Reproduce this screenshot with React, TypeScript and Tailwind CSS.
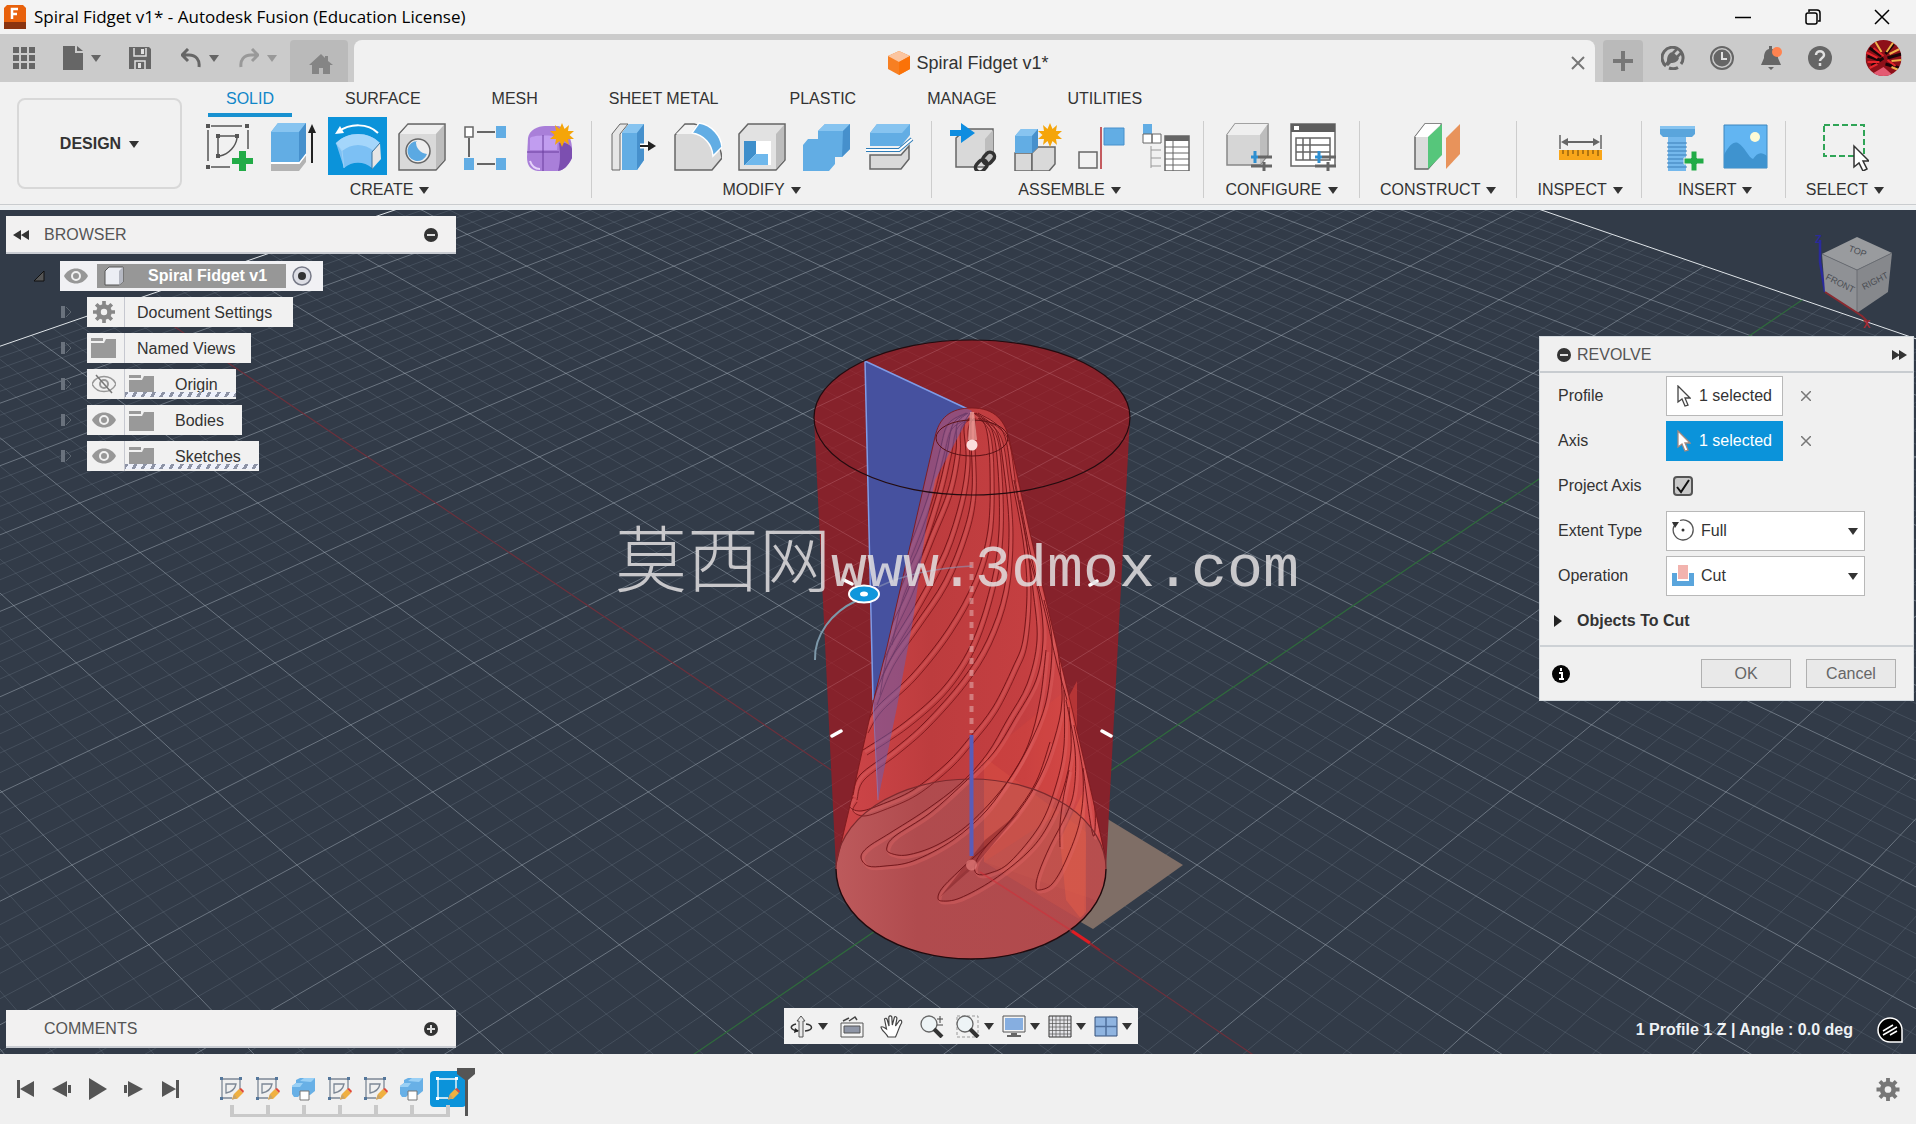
import type { ReactNode } from 'react';

type Point = [number, number];

const ORIGIN: Point = [972, 865];
const GRID_HALF = 11;

/** ground plane -> screen */
function project(x: number, y: number): Point {
  const s = x + y;
  const d = y - x;
  const w = 1 + 0.044 * d;
  return [
    (ORIGIN[0] + 112.5 * s + 42.3 * d) / w,
    (ORIGIN[1] - 38.2 * d) / w,
  ];
}

/** the part of a grid line that lies in front of the camera */
function gridLine(k: number, along: 'x' | 'y') {
  const from = along === 'x' ? -GRID_HALF : Math.max(-GRID_HALF, k - 14);
  const to = along === 'x' ? Math.min(GRID_HALF, k + 14) : GRID_HALF;
  const [a, b] =
    along === 'x'
      ? [project(from, k), project(to, k)]
      : [project(k, from), project(k, to)];
  return `M${a[0].toFixed(1)} ${a[1].toFixed(1)}L${b[0].toFixed(1)} ${b[1].toFixed(1)}`;
}

const majorLines: string[] = [];
const minorLines: string[] = [];
for (let i = -GRID_HALF * 5 + 1; i < GRID_HALF * 5; i++) {
  if (i === 0) continue;
  const target = i % 5 === 0 ? majorLines : minorLines;
  target.push(gridLine(i / 5, 'x'), gridLine(i / 5, 'y'));
}

function smooth(points: Point[], dx = 0, dy = 0) {
  const p = points.map(([x, y]): Point => [x + dx, y + dy]);
  let d = `M${p[0][0]} ${p[0][1]}`;
  for (let i = 0; i < p.length - 1; i++) {
    const p0 = p[i - 1] ?? p[i];
    const p1 = p[i];
    const p2 = p[i + 1];
    const p3 = p[i + 2] ?? p2;
    const c1x = p1[0] + (p2[0] - p0[0]) / 6;
    const c1y = p1[1] + (p2[1] - p0[1]) / 6;
    const c2x = p2[0] - (p3[0] - p1[0]) / 6;
    const c2y = p2[1] - (p3[1] - p1[1]) / 6;
    d += `C${c1x.toFixed(1)} ${c1y.toFixed(1)} ${c2x.toFixed(1)} ${c2y.toFixed(1)} ${p2[0]} ${p2[1]}`;
  }
  return d;
}

/* flutes running round the cone, top to bottom */
const FLUTES: Point[][] = [
  [[966, 413], [948, 424], [940, 450], [930, 490], [916, 530], [900, 570]],
  [[967, 413], [953, 424], [947, 452], [938, 490], [922, 540], [900, 590], [888, 640]],
  [[968, 413], [957, 424], [956, 450], [948, 490], [930, 535], [908, 590], [886, 640], [876, 690]],
  [[970, 413], [964, 426], [966, 460], [960, 500], [944, 550], [918, 600], [894, 640], [878, 672]],
  [[971, 413], [971, 440], [972, 490], [964, 530], [944, 580], [915, 624], [890, 660], [873, 700]],
  [[974, 413], [986, 428], [990, 470], [988, 530], [974, 580], [948, 628], [912, 674], [878, 706], [864, 728]],
  [[975, 413], [992, 430], [998, 470], [999, 530], [992, 580], [973, 640], [945, 685], [905, 722], [863, 750]],
  [[976, 413], [996, 430], [1004, 470], [1009, 530], [1004, 590], [987, 640], [962, 680], [925, 722], [893, 750], [860, 775], [853, 795]],
  [[978, 413], [1003, 432], [1012, 480], [1023, 540], [1027, 590], [1023, 640], [1013, 667], [993, 707], [970, 737], [947, 763], [913, 790], [880, 805], [860, 811], [849, 806], [853, 797]],
  [[1014, 480], [1026, 540], [1033, 590], [1037, 640], [1027, 684], [1007, 720], [987, 754], [960, 784], [926, 810], [890, 833], [868, 847], [861, 857], [868, 866], [885, 866], [913, 861], [953, 840], [987, 810], [1013, 773], [1033, 737], [1047, 697], [1052, 640], [1044, 600]],
  [[1030, 560], [1040, 600], [1043, 640], [1036, 680], [1014, 720], [994, 752], [967, 780], [930, 813], [895, 836], [887, 847], [890, 853], [907, 855], [937, 845], [970, 823], [1005, 785], [1028, 745], [1040, 700], [1046, 650]],
  [[1058, 650], [1062, 700], [1054, 740], [1040, 777], [1018, 812], [990, 842], [960, 870], [943, 887], [938, 897], [942, 901], [960, 898], [993, 880], [1027, 853], [1047, 827], [1063, 790], [1071, 750], [1069, 707]],
  [[1064, 690], [1064, 745], [1056, 785], [1040, 825], [1010, 862], [990, 873], [977, 874], [975, 864], [985, 848], [1012, 818], [1036, 782], [1050, 742]],
  [[1066, 700], [1075, 750], [1074, 790], [1066, 815], [1050, 846], [1039, 872], [1036, 886], [1039, 890], [1052, 884], [1066, 860], [1080, 820], [1083, 775], [1074, 725]],
  [[1069, 770], [1063, 800], [1060, 825], [1060, 847]],
  [[1076, 725], [1088, 770], [1095, 810], [1094, 836], [1090, 820], [1083, 768]],
  [[1020, 500], [1032, 560], [1047, 620], [1056, 660], [1067, 700]],
];
/* these ones are drawn as a pair of edges */
const PAIRED = 9;

const CONE =
  'M972 408C950 408 939 418 935 437L913 533L887 647L873 703L852 797L836 865A135 90 0 0 0 1106 865L1104 853L1093 800L1073 713L1057 647L1030 533L1010 443C1006 420 994 408 972 408Z';

const CYLINDER = 'M814 417.5A158 77.5 0 0 1 1130 417.5L1106 869A135 90 0 0 1 836 869Z';

function Scene() {
  const red = [project(-11, 0), project(3.6, 0)];
  const green = [project(0, -3), project(0, 11)];
  const corner = project(-11, 11);
  const left = project(-11, -2);
  const right = project(2, 11);
  return (
    <svg
      className="absolute inset-0 h-full w-full"
      viewBox="0 210 1916 844"
      preserveAspectRatio="xMidYMid slice"
      aria-hidden="true"
    >
      <defs>
        <clipPath id="cone">
          <path d={CONE} />
        </clipPath>
        <clipPath id="cylinder">
          <path d={CYLINDER} />
        </clipPath>
        <clipPath id="base">
          <ellipse cx="971" cy="869" rx="135" ry="90" />
        </clipPath>
        <linearGradient id="coneFill" x1="836" x2="1106" y1="0" y2="0" gradientUnits="userSpaceOnUse">
          <stop offset="0" stopColor="#cf4649" />
          <stop offset="0.35" stopColor="#bd3c3e" />
          <stop offset="0.7" stopColor="#c43f41" />
          <stop offset="1" stopColor="#d54c4c" />
        </linearGradient>
        <linearGradient id="baseFill" x1="836" x2="1106" y1="0" y2="0" gradientUnits="userSpaceOnUse">
          <stop offset="0" stopColor="#bd5a5c" />
          <stop offset="0.3" stopColor="#b04b4e" />
          <stop offset="1" stopColor="#b24a4c" />
        </linearGradient>
      </defs>
      <rect x="0" y="0" width="1916" height="1264" fill="#323b48" />
      <path d={minorLines.join('')} stroke="#8996a3" strokeOpacity="0.22" fill="none" />
      <path d={majorLines.join('')} stroke="#a9b4bf" strokeOpacity="0.48" fill="none" />
      <path d={`M${left.join(' ')}L${corner.join(' ')}L${right.join(' ')}`} stroke="#dfe4e8" fill="none" />
      <path d={`M${red[0].join(' ')}L${red[1].join(' ')}`} stroke="#6c303c" strokeWidth="1.2" />
      <path d={`M${green[0].join(' ')}L${green[1].join(' ')}`} stroke="#2f6b3c" strokeWidth="1.2" />

      <path d="M984 867L1093 929L1183 865L1078 801Z" fill="#7f6e66" />

      <path d={CYLINDER} fill="#86222b" />
      <g clipPath="url(#cylinder)" fill="none">
        <path d={minorLines.join('')} stroke="#c07a80" strokeOpacity="0.1" />
        <path d={majorLines.join('')} stroke="#c98088" strokeOpacity="0.32" />
      </g>
      <path d="M865 361L972 411L935 480L873 700Z" fill="#46519f" />
      <path d="M873 700L865 361L972 411" stroke="#7f9be6" strokeWidth="1.5" fill="none" />

      <path d={CONE} fill="url(#coneFill)" />
      <ellipse cx="971" cy="869" rx="135" ry="90" fill="url(#baseFill)" />
      <g clipPath="url(#base)">
        <path d="M984 750H1110V905L984 862Z" fill="#cf6158" fillOpacity="0.2" />
      </g>
      <g clipPath="url(#cone)">
        <path d="M984 757L1077 681L1078 801L984 862Z" fill="#e8503c" fillOpacity="0.18" />
        <path d="M984 757L1086 832L1084 922L984 862Z" fill="#e8604a" fillOpacity="0.22" />
        <path d="M1066 900L1060 840L1084 790L1086 840V925Z" fill="#e8604a" fillOpacity="0.45" />
        <g fill="none">
          {FLUTES.map((flute, i) => (
            <path key={i} d={smooth(flute, 2, 2)} stroke="#de6463" strokeOpacity="0.4" strokeWidth="3" />
          ))}
          {FLUTES.map((flute, i) => (
            <path key={i} d={smooth(flute)} stroke="#6e1216" strokeOpacity="0.9" />
          ))}
          {FLUTES.slice(0, PAIRED).map((flute, i) => (
            <path key={i} d={smooth(flute, 4, 5)} stroke="#741519" strokeOpacity="0.8" />
          ))}
        </g>
        <path d="M975 866L1020 812L985 840L940 897Z" fill="#7a1d22" fillOpacity="0.45" />
        <path d="M972 411L935 480L927 520L913 620L897 707L878 800L873 700L865 361Z" fill="#6460b8" fillOpacity="0.5" />
      </g>
      <path d="M873 700L878 800" stroke="#8a7fc0" strokeOpacity="0.7" />
      <path d="M1067 700L1077 681V735Z" fill="#d5433d" fillOpacity="0.6" />
      <path d="M836 865L852 797L873 703L887 647L913 533L935 437C939 418 950 408 972 408C994 408 1006 420 1010 443L1030 533L1057 647L1073 713L1093 800L1105 855" fill="none" stroke="#7a171b" strokeOpacity="0.85" />
      <ellipse cx="972" cy="438" rx="36" ry="18" fill="none" stroke="#5c1216" />
      <path d="M970 412L974 412L977 440L968 440Z" fill="#f0a9a4" fillOpacity="0.7" />
      <ellipse cx="972" cy="417.5" rx="158" ry="77.5" fill="none" stroke="#230b0f" strokeWidth="1.2" />
      <path d="M836 869A135 90 0 0 1 1106 869" fill="none" stroke="#7d2a2e" strokeWidth="1.2" />
      <path d="M836 869A135 90 0 0 0 1106 869" fill="none" stroke="#200a0d" strokeWidth="1.4" />

      <path d="M971.500 562V733" stroke="#eccaca" strokeOpacity="0.45" strokeWidth="4" strokeDasharray="6 6" />
      <path d="M971.500 735V856" stroke="#595cba" strokeWidth="4" />
      <path d="M980 872L1072 931" stroke="#d0303a" strokeOpacity="0.6" strokeWidth="1.5" />
      <path d="M1072 931L1090 943" stroke="#e01c22" strokeWidth="3" />
      <path d="M1090 943L1100 950" stroke="#a02028" strokeWidth="1.5" />
      <circle cx="971.500" cy="865" r="5.500" fill="#e07a78" fillOpacity="0.75" />
      <circle cx="972" cy="445" r="5.500" fill="#fbdcdc" />

      <path d="M815 660C814 635 832 612 856 601" fill="none" stroke="#7d98a9" strokeWidth="2" />
      <path d="M878 587C905 574 935 568 972 566" fill="none" stroke="#8d98b8" strokeOpacity="0.6" strokeWidth="1.500" />
      <path d="M844 580L852 584M1090 585L1097 581M832 736L841 731M1102 731L1111 736" stroke="#fff" strokeWidth="3.500" strokeLinecap="round" />
      <ellipse cx="864" cy="594" rx="15" ry="8.500" fill="#0f96dc" stroke="#fff" strokeWidth="2" />
      <ellipse cx="864" cy="594" rx="4" ry="2.500" fill="#fff" />
    </svg>
  );
}

function ViewCube() {
  return (
    <svg className="absolute top-4 right-2 h-[104px] w-[100px]" viewBox="1808 226 100 104" aria-label="View cube">
      <path d="M1820 240V262L1825 292" stroke="#2a2a9c" strokeWidth="2.500" fill="none" />
      <path d="M1857 237L1892 253L1857 270L1822 254Z" fill="#999b9e" />
      <path d="M1822 254L1857 270V313L1825 292Z" fill="#8f9195" />
      <path d="M1857 270L1892 253L1888 292L1857 313Z" fill="#86888c" />
      <path d="M1822 254L1857 270L1892 253M1857 270V313" stroke="#6a6d73" fill="none" />
      <path d="M1825 292L1862 316L1868 322" stroke="#8a2a30" strokeWidth="2" fill="none" />
      <g fontFamily="Liberation Sans" fontSize="9" fill="#4a4d53">
        <text transform="translate(1825 279) rotate(27)">FRONT</text>
        <text transform="translate(1864 290) rotate(-27)">RIGHT</text>
        <text transform="translate(1848 251) rotate(20)">TOP</text>
      </g>
      <g fontFamily="Liberation Sans" fontSize="11" fontWeight="bold">
        <text x="1815" y="243" fill="#2a2a9c">Z</text>
        <text x="1863" y="328" fill="#a82b32">X</text>
      </g>
    </svg>
  );
}

const Caret = ({ className = 'text-[#333]' }: { className?: string }) => (
  <svg className={`h-2 w-[10px] shrink-0 ${className}`} viewBox="0 0 10 8" fill="currentColor" aria-hidden="true">
    <path d="M0 1H10L5 8Z" />
  </svg>
);

function Icon({ children, className = 'h-[50px] w-12', box = '0 0 48 50' }: { children: ReactNode; className?: string; box?: string }) {
  return (
    <svg className={`shrink-0 ${className}`} viewBox={box} fill="none" aria-hidden="true">
      {children}
    </svg>
  );
}

const STAR = 'M0-12L2.500-6L7-10L6-4L12-4L7.500 0L12 4L6 4L7 10L2.500 6L0 12L-2.500 6L-7 10L-6 4L-12 4L-7.500 0L-12-4L-6-4L-7-10L-2.500-6Z';

const Star = ({ x, y }: { x: number; y: number }) => <path transform={`translate(${x} ${y})`} d={STAR} fill="#f5a50a" />;

const sliders = (
  <g strokeWidth="3">
    <path d="M25 36H32" stroke="#2f8fd0" />
    <path d="M29 30V42" stroke="#2f8fd0" />
    <path d="M32 36H46M25 45H46" stroke="#666" />
    <path d="M38 41V50" stroke="#666" />
  </g>
);

const ICONS: Record<string, ReactNode> = {
  'Create Sketch': (
    <>
      <path d="M5 5H36M2 9V40M42 9V28M5 46H24" stroke="#555" strokeWidth="1.500" />
      <path d="M0 3H4V7H0ZM39 3H43V7H39ZM0 44H4V48H0ZM10 13H14V17H10ZM29 13H33V17H29ZM10 33H14V37H10Z" fill="#555" />
      <path d="M14 15H29M12 17V33M31 17C30 25 23 33 14 35" stroke="#555" strokeWidth="1.500" />
      <path d="M33 30H40V37H47V43H40V50H33V43H26V37H33Z" fill="#22ab47" />
    </>
  ),
  Extrude: (
    <>
      <path d="M1 43H29L36 34V41L29 50H1Z" fill="#b3b3b3" />
      <path d="M1 42H29L36 33" stroke="#fff" strokeWidth="2" />
      <path d="M1 11L8 2H36V32L29 41H1Z" fill="#62ade4" />
      <path d="M1 11L8 2H36L29 11Z" fill="#87c4f0" />
      <path d="M29 11L36 2V32L29 41Z" fill="#4690cc" />
      <path d="M42 42V8" stroke="#222" strokeWidth="2" />
      <path d="M42 3L46 12H38Z" fill="#222" />
    </>
  ),
  Revolve: (
    <>
      <path d="M2 22C14 10 34 10 46 22L38 47C30 40 18 40 10 47Z" fill="#7cc0f4" />
      <path d="M2 22C14 10 34 10 46 22L40 30C30 22 18 22 8 30Z" fill="#a4d6fb" />
      <path d="M46 22L47 38L38 48L38 31Z" fill="#e6e6e6" />
      <path d="M38 48V31L46 22" stroke="#38729c" strokeWidth="1" />
      <path d="M2 22L8 30L10 47" stroke="#9bd0f7" />
      <path d="M4 11C16 2 34 2 44 12" stroke="#fff" strokeWidth="2" />
      <path d="M1 13L6 5L10 12Z" fill="#fff" />
    </>
  ),
  Hole: (
    <>
      <path d="M1 13L10 3H47V39L38 49H1Z" fill="#d9d9d9" stroke="#666" strokeWidth="1.500" />
      <path d="M2 13L10 4H46L38 13Z" fill="#efefef" />
      <path d="M38 13L46 4V39L38 48Z" fill="#bdbdbd" />
      <circle cx="20" cy="30" r="12" fill="#eee" stroke="#666" strokeWidth="1.500" />
      <path d="M20 20A10 10 0 1 0 29 33A12 12 0 0 1 18 20Z" fill="#5ba9e2" />
    </>
  ),
  Pattern: (
    <>
      <path d="M15 11H33M7 17V36M15 43H33" stroke="#666" strokeWidth="2" />
      <path d="M3 6H11V16H3Z" fill="#fff" stroke="#666" strokeWidth="1.500" />
      <path d="M34 5H44V17H34ZM2 37H12V49H2ZM34 37H44V49H34Z" fill="#62ade4" />
    </>
  ),
  'Create Form': (
    <>
      <path d="M2 17C3 9 12 5 19 5H32C40 6 45 16 46 26V37C42 46 36 50 31 50H12C4 49 1 44 1 36Z" fill="#a97fd9" />
      <path d="M33 22C40 21 45 24 46 28V37C42 45 38 49 32 50C35 40 34 30 33 22Z" fill="#7c4fb0" />
      <path d="M4 17C8 14 24 14 32 16L31 29H4Z" fill="#c19df0" />
      <path d="M1 31H33M17 14V50" stroke="#6a3f9e" />
      <path d="M4 40C6 46 10 48 14 48" stroke="#e6d4fb" strokeWidth="2" />
      <Star x={36} y={14} />
    </>
  ),
  'Press Pull': (
    <>
      <path d="M2 13L10 3H18L10 13V49H2Z" fill="#e6e6e6" stroke="#666" />
      <path d="M12 12L19 3H34V39L27 49H12Z" fill="#62ade4" />
      <path d="M12 12L19 3H34L27 12Z" fill="#87c4f0" />
      <path d="M27 12L34 3V39L27 49Z" fill="#4690cc" />
      <path d="M30 25H42" stroke="#fff" strokeWidth="5" />
      <path d="M30 25H40" stroke="#222" strokeWidth="2" />
      <path d="M38 20L46 25L38 30Z" fill="#222" />
    </>
  ),
  Fillet: (
    <>
      <path d="M1 14L11 3H20C34 6 46 20 48 37L38 49H1Z" fill="#d9d9d9" stroke="#666" strokeWidth="1.500" />
      <path d="M2 13L11 4H22L17 13Z" fill="#f3f3f3" />
      <path d="M25 2C38 4 47 15 48 26L39 35C38 23 30 14 18 12Z" fill="#62ade4" stroke="#fff" strokeWidth="1.500" />
    </>
  ),
  Shell: (
    <>
      <path d="M1 13L10 3H47V39L38 49H1Z" fill="#e2e2e2" stroke="#666" strokeWidth="1.500" />
      <path d="M38 13L46 4V39L38 48Z" fill="#bdbdbd" />
      <path d="M6 20H33V44H6Z" fill="#fff" />
      <path d="M6 20H18V33L7 44H6Z" fill="#3f8fcb" />
      <path d="M18 33H30V44H7Z" fill="#6fb8ec" />
    </>
  ),
  Combine: (
    <>
      <path d="M1 24L6 18H16V10L23 3H48V28L40 36H33V43L27 50H1Z" fill="#62ade4" />
      <path d="M16 10L23 3H48L41 10Z" fill="#87c4f0" />
      <path d="M41 10L48 3V28L40 36Z" fill="#4690cc" />
    </>
  ),
  Split: (
    <>
      <path d="M4 12L11 3H44V14L35 25H4Z" fill="#62ade4" />
      <path d="M4 12L11 3H44L36 12Z" fill="#87c4f0" />
      <path d="M4 34H35L43 25V38L35 48H4Z" fill="#d9d9d9" stroke="#666" strokeWidth="1.500" />
      <path d="M0 29H33L46 18" stroke="#2f7db8" strokeWidth="4" />
      <path d="M0 29H33L46 18" stroke="#fff" strokeWidth="2" />
    </>
  ),
  'Insert Derive': (
    <>
      <path d="M6 17L16 8H43V36L35 46H6Z" fill="#d9d9d9" stroke="#666" strokeWidth="1.500" />
      <path d="M35 18L43 9V36L35 46Z" fill="#bdbdbd" />
      <path d="M0 9H11V2L25 12L11 22V15H0Z" fill="#0e8de0" />
      <g stroke="#333" strokeWidth="3.500">
        <rect x="-9" y="-4.500" width="13" height="9" rx="4.500" transform="translate(33 43) rotate(-48)" />
        <rect x="-4" y="-4.500" width="13" height="9" rx="4.500" transform="translate(37 39) rotate(-48)" />
      </g>
    </>
  ),
  'New Component': (
    <>
      <path d="M1 32H18V50H1Z" fill="#d9d9d9" stroke="#666" strokeWidth="1.500" />
      <path d="M18 32L24 26H41V43L35 50H18Z" fill="#d9d9d9" stroke="#666" strokeWidth="1.500" />
      <path d="M1 15L7 8H24V26L18 32H1Z" fill="#62ade4" />
      <path d="M1 15L7 8H24L18 15Z" fill="#87c4f0" />
      <path d="M18 15L24 8V26L18 32Z" fill="#4690cc" />
      <Star x={36} y={14} />
    </>
  ),
  Joint: (
    <>
      <path d="M1 31H19V47H1Z" stroke="#666" strokeWidth="1.500" />
      <path d="M26 7H46V24H26Z" fill="#62ade4" stroke="#4690cc" />
      <path d="M23 6V48" stroke="#b4282e" strokeWidth="1.500" />
    </>
  ),
  'Motion Study': (
    <>
      <path d="M1 3H10V13H1Z" fill="#62ade4" />
      <path d="M1 13H10V22H1ZM10 13H19V22H10Z" fill="#fff" stroke="#666" />
      <path d="M9 25V47M9 29H19M9 37H19M9 45H19" stroke="#999" />
      <path d="M23 15H47V50H23Z" fill="#fff" stroke="#666" strokeWidth="1.500" />
      <path d="M23 15H47V20H23Z" fill="#666" />
      <path d="M31 20V50M23 26H47M23 32H47M23 38H47M23 44H47" stroke="#666" />
    </>
  ),
  Configure: (
    <>
      <path d="M1 14L9 3H42V34L34 44H1Z" fill="#d6d6d6" stroke="#888" strokeWidth="1.500" />
      <path d="M1 14L9 3H42L34 14Z" fill="#efefef" />
      <path d="M34 14L41 4V34L34 44Z" fill="#bdbdbd" />
      {sliders}
    </>
  ),
  'Configuration Table': (
    <>
      <path d="M1 3H45V45H1Z" fill="#fff" stroke="#666" strokeWidth="1.500" />
      <path d="M1 3H45V11H1Z" fill="#5d5d5d" />
      <path d="M4 5H9V9H4Z" fill="#fff" />
      <path d="M6 17H40V39H6ZM13 17V39M20 17V39M6 24H40M6 31H40" stroke="#666" strokeWidth="1.500" />
      {sliders}
    </>
  ),
  'Offset Plane': (
    <>
      <path d="M1 16L11 3H27V33L14 48H1Z" fill="#dcdcdc" stroke="#666" strokeWidth="1.500" />
      <path d="M1 16L11 3H27L14 16Z" fill="#fff" />
      <path d="M14 16L28 3V34L14 48Z" fill="#56c67b" />
      <path d="M32 17L46 3V33L32 48Z" fill="#e8935b" />
    </>
  ),
  Measure: (
    <>
      <path d="M4 14V28M45 14V28" stroke="#666" strokeWidth="1.500" />
      <path d="M10 21H39" stroke="#666" strokeWidth="2" />
      <path d="M5 21L12 17V25ZM44 21L37 17V25Z" fill="#666" />
      <path d="M3 29H46V39H3Z" fill="#f9a61a" />
      <path d="M7 29V33M12 29V35M17 29V33M22 29V35M27 29V33M32 29V35M37 29V33M42 29V35" stroke="#6b4305" />
    </>
  ),
  'Insert Fastener': (
    <>
      <path d="M1 5H36V13L33 16H4L1 13Z" fill="#5aa5dc" />
      <path d="M1 5H36V8H1Z" fill="#87c4f0" />
      <path d="M9 16H27V50H9Z" fill="#74b8ec" />
      <path d="M8 22H28M8 26H28M8 30H28M8 34H28M8 38H28M8 42H28M8 46H28" stroke="#3b7fb8" />
      <path d="M32 30H38V37H45V43H38V50H32V43H25V37H32Z" fill="#22ab47" stroke="#f1f1f1" />
    </>
  ),
  'Insert Decal': (
    <>
      <path d="M1 4H44V47H1Z" fill="#62b5f2" stroke="#3d86be" />
      <path d="M1 34C6 24 11 20 15 22C22 26 25 36 30 38C34 32 38 30 44 35V47H1Z" fill="#3f93cf" />
      <circle cx="32" cy="16" r="5" fill="#fdfbd6" />
    </>
  ),
  Select: (
    <>
      <path d="M3 4H43V35H3Z" stroke="#2fa456" strokeWidth="2" strokeDasharray="6 3" />
      <path d="M33 25V46L38 42L42 50L46 48L42 40H48Z" fill="#fff" stroke="#333" strokeWidth="1.500" />
    </>
  ),
};

const GROUPS = [
  { label: 'CREATE', pad: 'pr-3 pl-[13px]', icons: ['Create Sketch', 'Extrude', 'Revolve', 'Hole', 'Pattern', 'Create Form'] },
  { label: 'MODIFY', pad: 'px-3', icons: ['Press Pull', 'Fillet', 'Shell', 'Combine', 'Split'] },
  { label: 'ASSEMBLE', pad: 'pr-2 pl-3', icons: ['Insert Derive', 'New Component', 'Joint', 'Motion Study'] },
  { label: 'CONFIGURE', pad: 'px-4', icons: ['Configure', 'Configuration Table'] },
  { label: 'CONSTRUCT', pad: 'px-5', icons: ['Offset Plane'] },
  { label: 'INSPECT', pad: 'pr-[18px] pl-5', icons: ['Measure'] },
  { label: 'INSERT', pad: 'pr-2 pl-3', icons: ['Insert Fastener', 'Insert Decal'] },
  { label: 'SELECT', pad: 'px-5', icons: ['Select'] },
];

const TABS = ['SOLID', 'SURFACE', 'MESH', 'SHEET METAL', 'PLASTIC', 'MANAGE', 'UTILITIES'];

function TitleBar() {
  return (
    <header className="flex h-[34px] items-center bg-[#f3f3f3] pl-1">
      <Icon className="h-6 w-[22px]" box="0 0 22 24">
        <path d="M3 0H19L22 3V24H0V3Z" fill="#e8610c" />
        <path d="M0 17H22V24H0Z" fill="#8a3410" />
        <path d="M8 14V4H14M8 9H13" stroke="#fff" strokeWidth="2.500" />
      </Icon>
      <h1 className="ml-2 font-['Open_Sans',sans-serif] text-[17px] text-black">
        Spiral Fidget v1* - Autodesk Fusion (Education License)
      </h1>
      <div className="ml-auto flex text-black">
        <button aria-label="Minimize" className="grid h-[34px] w-[70px] place-items-center">
          <Icon className="h-4 w-4" box="0 0 16 16">
            <path d="M0 8.500H16" stroke="currentColor" strokeWidth="1.500" />
          </Icon>
        </button>
        <button aria-label="Restore" className="grid h-[34px] w-[70px] place-items-center">
          <Icon className="h-4 w-4" box="0 0 16 16">
            <path d="M4 3V1H12C14 1 15 2 15 4V12H13" stroke="currentColor" strokeWidth="1.500" />
            <rect x="1" y="4" width="11" height="11" rx="2" stroke="currentColor" strokeWidth="1.500" />
          </Icon>
        </button>
        <button aria-label="Close" className="grid h-[34px] w-[68px] place-items-center">
          <Icon className="h-4 w-4" box="0 0 16 16">
            <path d="M1 1L15 15M15 1L1 15" stroke="currentColor" strokeWidth="1.500" />
          </Icon>
        </button>
      </div>
    </header>
  );
}

function DocumentBar() {
  return (
    <div className="flex h-12 items-end bg-[#cbcbcb] text-[#666]">
      <div className="flex h-full w-[290px] shrink-0 items-center pl-[13px]">
        <button aria-label="Data panel">
          <Icon className="h-[22px] w-[22px]" box="0 0 22 22">
            <path d="M0 0H6V6H0ZM8 0H14V6H8ZM16 0H22V6H16ZM0 8H6V14H0ZM8 8H14V14H8ZM16 8H22V14H16ZM0 16H6V22H0ZM8 16H14V22H8ZM16 16H22V22H16Z" fill="currentColor" />
          </Icon>
        </button>
        <button aria-label="File" className="ml-7 flex items-center gap-2">
          <Icon className="h-6 w-5" box="0 0 20 24">
            <path d="M0 0H12V7H20V24H0Z" fill="currentColor" />
            <path d="M14 0L20 5H14Z" fill="currentColor" />
          </Icon>
          <Caret className="text-[#666]" />
        </button>
        <button aria-label="Save" className="ml-7">
          <Icon className="h-[22px] w-[22px]" box="0 0 22 22">
            <path d="M0 0H20L22 2V22H0Z" fill="currentColor" />
            <path d="M5 1V9H17V1M6 22V14H16V22" stroke="#e0e0e0" strokeWidth="1.500" />
            <path d="M12 2H15V7H12ZM9 16H12V21H9Z" fill="#e0e0e0" />
          </Icon>
        </button>
        <button aria-label="Undo" className="ml-[30px] flex items-center gap-2">
          <Icon className="h-5 w-5" box="0 0 20 20">
            <path d="M7 1L1 7L7 13M2 7H8C15 7 19 12 18 19" stroke="currentColor" strokeWidth="3" />
          </Icon>
          <Caret className="text-[#666]" />
        </button>
        <button aria-label="Redo" className="ml-5 flex items-center gap-2 text-[#999]">
          <Icon className="h-5 w-5" box="0 0 20 20">
            <path d="M13 1L19 7L13 13M18 7H12C5 7 1 12 2 19" stroke="currentColor" strokeWidth="3" />
          </Icon>
          <Caret className="text-[#999]" />
        </button>
      </div>
      <button aria-label="Home" className="grid h-[42px] w-[58px] shrink-0 place-items-center rounded-t bg-[#bababa] pt-1.5 pl-1 text-[#858585]">
        <Icon className="h-5 w-6" box="0 0 24 20">
          <path d="M12 0L16 4V2H19V7L24 11H21V20H14V14H10V20H3V11H0Z" fill="currentColor" />
        </Icon>
      </button>
      <div className="ml-1.5 flex h-[42px] min-w-0 flex-1 items-center rounded-t-lg bg-[#f1f1f1] pt-1 pr-1.5">
        <div className="flex flex-1 items-center justify-center gap-1.5 pl-4 text-lg text-[#333]">
          <Icon className="h-6 w-[22px]" box="0 0 22 24">
            <path d="M11 0L22 5V18L11 24L0 18V5Z" fill="#f77f22" />
            <path d="M11 0L22 5L11 11L0 5Z" fill="#fbc5a0" />
            <path d="M11 11L22 5V18L11 24Z" fill="#fb7208" />
          </Icon>
          Spiral Fidget v1*
        </div>
        <button aria-label="Close tab" className="p-1">
          <Icon className="h-[14px] w-[14px]" box="0 0 14 14">
            <path d="M1 1L13 13M13 1L1 13" stroke="#777" strokeWidth="2" />
          </Icon>
        </button>
      </div>
      <button aria-label="New tab" className="ml-2 grid h-[42px] w-10 shrink-0 place-items-center rounded-t bg-[#bababa]">
        <Icon className="h-5 w-5" box="0 0 20 20">
          <path d="M10 0V20M0 10H20" stroke="#777" strokeWidth="4" />
        </Icon>
      </button>
      <div className="flex h-full shrink-0 items-center gap-[25px] pr-[14px] pl-[18px]">
        <button aria-label="Extensions">
          <Icon className="h-6 w-6" box="0 0 24 24">
            <path d="M5 20A10.500 10.500 0 1 1 20 18M8 22A10.500 10.500 0 0 0 17 21.500" stroke="currentColor" strokeWidth="3" />
            <path d="M6 15C6 9 9 6 12 6L18 12C17 16 13 17 10 17L7 20L4 18Z" fill="currentColor" />
            <path d="M12 7L16 3M16 11L20 7" stroke="currentColor" strokeWidth="2.500" />
          </Icon>
        </button>
        <button aria-label="Job status">
          <Icon className="h-6 w-6" box="0 0 24 24">
            <circle cx="12" cy="12" r="11" stroke="currentColor" strokeWidth="2" />
            <circle cx="12" cy="12" r="8.500" fill="currentColor" />
            <path d="M12 6V13H17" stroke="#e0e0e0" strokeWidth="2" />
          </Icon>
        </button>
        <button aria-label="Notifications">
          <Icon className="h-6 w-6" box="0 0 24 24">
            <path d="M10 0H13V3C18 4 19 8 19 12L22 19H2L5 12C5 8 6 4 10 3ZM9 21H15L12 24Z" fill="currentColor" />
            <circle cx="18" cy="6" r="5" fill="#ff8350" />
          </Icon>
        </button>
        <button aria-label="Help">
          <Icon className="h-6 w-6" box="0 0 24 24">
            <circle cx="12" cy="12" r="12" fill="currentColor" />
            <path d="M8 9C8 4 16 4 16 9C16 12 12 12 12 15M12 17V20" stroke="#e0e0e0" strokeWidth="2.500" />
          </Icon>
        </button>
        <button aria-label="Account">
          <Icon className="ml-2 h-9 w-[37px]" box="0 0 36 36">
            <clipPath id="avatar">
              <circle cx="18" cy="18" r="18" />
            </clipPath>
            <g clipPath="url(#avatar)">
              <path d="M0 0H36V36H0Z" fill="#8e1019" />
              <path d="M4 8L16 16M2 16L14 20M6 26L18 18M20 14L28 4M22 18L36 14M20 24L34 28" stroke="#1b0508" strokeWidth="3" />
              <path d="M10 2L16 12M28 2L21 12M24 14L34 9M26 21L36 20M26 27L33 30" stroke="#f0b24a" strokeWidth="2" />
              <path d="M0 12L12 18M2 22L14 22M8 8L18 16M22 20L30 26M4 28L12 24" stroke="#e5262c" strokeWidth="2" />
              <path d="M8 33L18 27L26 34V36H8Z" fill="#e45a72" />
            </g>
          </Icon>
        </button>
      </div>
    </div>
  );
}

function Ribbon() {
  return (
    <div className="flex h-32 border-b-4 border-[#edf0f2] bg-[#f1f1f1] text-[#333]">
      <div className="flex h-[123px] w-full border-b border-[#c9cccf]">
        <button className="mt-4 ml-[17px] flex h-[91px] w-[165px] shrink-0 items-center justify-center gap-2 rounded-lg border-2 border-[#d8d8d8] text-base font-bold">
          DESIGN
          <Caret />
        </button>
        <div className="ml-[5px] flex flex-col">
          <nav className="flex h-[35px] gap-[35px] pl-[21px]">
            {TABS.map((tab, i) => (
              <button
                key={tab}
                className={`border-b-4 px-[18px] pt-0.5 whitespace-nowrap ${i === 0 ? 'border-[#1891d0] text-[#1086c8]' : 'border-transparent'}`}
              >
                {tab}
              </button>
            ))}
          </nav>
          <div className="flex">
            {GROUPS.map((group, i) => (
              <div key={group.label} className="flex">
                {i > 0 && <div className="mt-1 h-[77px] w-px bg-[#cdcdcd]" />}
                <div className={`flex flex-col items-center ${group.pad}`}>
                  <div className="flex gap-[5px]">
                    {group.icons.map((name) => (
                      <button
                        key={name}
                        aria-label={name}
                        className={`grid h-[58px] w-[59px] place-items-center ${name === 'Revolve' ? 'bg-[#0b93da]' : ''}`}
                      >
                        <Icon>{ICONS[name]}</Icon>
                      </button>
                    ))}
                  </div>
                  <button className="flex h-7 items-center gap-1.5 pt-0.5">
                    {group.label}
                    <Caret />
                  </button>
                </div>
              </div>
            ))}
          </div>
        </div>
      </div>
    </div>
  );
}

const Eye = ({ off }: { off?: boolean }) => (
  <Icon className="h-5 w-6" box="0 0 24 20">
    <path
      d="M0 10C5 0 19 0 24 10C19 20 5 20 0 10Z"
      fill={off ? 'none' : '#979797'}
      stroke={off ? '#979797' : 'none'}
      strokeWidth="1.500"
    />
    <circle cx="12" cy="10" r="4" stroke={off ? '#979797' : '#f1f1f1'} strokeWidth="2" />
    {off && <path d="M4 1L20 19" stroke="#777" strokeWidth="1.500" />}
  </Icon>
);

const Folder = () => (
  <Icon className="h-5 w-[25px]" box="0 0 25 20">
    <path d="M0 0H12V3H0ZM0 5H13L15 1H25V20H0Z" fill="#999" />
  </Icon>
);

const Gear = ({ className }: { className: string }) => (
  <Icon className={className} box="0 0 24 24">
    <circle cx="12" cy="12" r="6" stroke="currentColor" strokeWidth="5" />
    <path d="M12 0V5M12 19V24M0 12H5M19 12H24M3.500 3.500L7 7M17 17L20.500 20.500M20.500 3.500L17 7M7 17L3.500 20.500" stroke="currentColor" strokeWidth="4" />
  </Icon>
);

const TREE = [
  { name: 'Document Settings', icon: 'gear', pad: 'pr-[21px]' },
  { name: 'Named Views', icon: 'folder', pad: 'pr-4' },
  { name: 'Origin', icon: 'hidden', hatched: true, pad: 'pr-[18px]' },
  { name: 'Bodies', icon: 'visible', pad: 'pr-[18px]' },
  { name: 'Sketches', icon: 'visible', hatched: true, pad: 'pr-[18px]' },
];

function Browser() {
  return (
    <aside className="absolute top-1.5 left-1.5 w-[450px] text-base text-[#333]">
      <div className="flex h-[38px] items-center border-b-2 border-[#c9ccd2] bg-[#f2f1f1] pt-0.5 pr-[18px] pl-[7px] text-[#555]">
        <button aria-label="Collapse browser">
          <Icon className="h-[10px] w-4" box="0 0 16 10">
            <path d="M8 0V10L0 5ZM16 0V10L8 5Z" fill="#333" />
          </Icon>
        </button>
        <h2 className="ml-[15px]">BROWSER</h2>
        <button aria-label="Hide browser" className="ml-auto">
          <Icon className="h-[14px] w-[14px]" box="0 0 14 14">
            <circle cx="7" cy="7" r="7" fill="#333" />
            <path d="M3 7H11" stroke="#ddd" strokeWidth="2" />
          </Icon>
        </button>
      </div>
      <ul className="mt-[7px] flex flex-col gap-1.5">
        <li className="flex h-[30px] items-center">
          <Icon className="ml-[27px] h-3 w-3" box="0 0 12 12">
            <path d="M1 11L11 1V11Z" fill="#555" stroke="#111" />
          </Icon>
          <div className="ml-[15px] flex h-full items-center bg-[#f1f1f4] pr-[11px] pl-1">
            <Eye />
            <button className="mr-1.5 ml-[9px] flex h-6 items-center bg-[#979797] pr-[19px] pl-[7px] font-bold text-white">
              <Icon className="mr-6 h-5 w-5" box="0 0 20 20">
                <path d="M1 5L5 1H19V16L15 19H1Z" fill="#eceef4" stroke="#555" />
                <path d="M15 5L19 1V16L15 19Z" fill="#b5b8c2" />
              </Icon>
              Spiral Fidget v1
            </button>
            <Icon className="h-5 w-5" box="0 0 20 20">
              <circle cx="10" cy="10" r="9" fill="#dcdde4" stroke="#777a88" strokeWidth="1.500" />
              <circle cx="10" cy="10" r="4" fill="#333" />
            </Icon>
          </div>
        </li>
        {TREE.map((node) => (
          <li key={node.name} className="flex h-[30px] items-center">
            <Icon className="ml-[55px] h-3 w-[11px]" box="0 0 11 12">
              <path d="M0 0H4V12H0Z" fill="#6a727d" />
              <path d="M5 1L10 6L5 11" fill="none" stroke="#5b646e" />
            </Icon>
            <div className="ml-[15px] flex h-full bg-[#f1f1f1]">
              <div className="grid w-[38px] place-items-center border-r border-[#c6c8d0] pr-1 text-[#888]">
                {node.icon === 'gear' && <Gear className="h-[22px] w-6" />}
                {node.icon === 'folder' && <Folder />}
                {node.icon === 'visible' && <Eye />}
                {node.icon === 'hidden' && <Eye off />}
              </div>
              <div className={`relative flex items-center pt-0.5 ${node.pad}`}>
                {node.icon === 'visible' || node.icon === 'hidden' ? (
                  <span className="mr-[21px] ml-1">
                    <Folder />
                  </span>
                ) : (
                  <span className="w-3" />
                )}
                {node.name}
                {node.hatched && (
                  <span className="absolute bottom-0.5 left-0 h-[5px] w-full bg-[repeating-linear-gradient(120deg,#8d93a5_0_3px,#eef1fb_3px_8px)]" />
                )}
              </div>
            </div>
          </li>
        ))}
      </ul>
    </aside>
  );
}

const Cursor = ({ light }: { light?: boolean }) => (
  <Icon className="h-[22px] w-[14px]" box="0 0 14 22">
    <path
      d="M1 1V17L5 14L8 21L11 20L8 13H13Z"
      fill={light ? '#fff' : '#fafafa'}
      stroke={light ? '#a58a80' : '#444'}
      strokeWidth="1.300"
    />
  </Icon>
);

const Clear = ({ label }: { label: string }) => (
  <button aria-label={label} className="ml-[18px]">
    <Icon className="h-[10px] w-[10px]" box="0 0 10 10">
      <path d="M0 0L10 10M10 0L0 10" stroke="#777" strokeWidth="1.500" />
    </Icon>
  </button>
);

function RevolveDialog() {
  return (
    <section className="absolute top-[126px] right-0.5 w-[375px] border border-[#d3d9de] bg-[#f0f0f0] text-base text-[#333]">
      <div className="flex h-9 items-center border-b-2 border-[#c8ccd0] pt-0.5 pr-1.5 pl-[17px] text-[#555]">
        <Icon className="h-[14px] w-[14px]" box="0 0 14 14">
          <circle cx="7" cy="7" r="7" fill="#333" />
          <path d="M3 7H11" stroke="#ddd" strokeWidth="2" />
        </Icon>
        <h2 className="ml-1.5">REVOLVE</h2>
        <button aria-label="Dock" className="ml-auto">
          <Icon className="h-[10px] w-[15px]" box="0 0 15 10">
            <path d="M0 0V10L8 5ZM7 0V10L15 5Z" fill="#333" />
          </Icon>
        </button>
      </div>
      <div className="flex flex-col gap-[5px] pt-[3px] pl-[18px]">
        <div className="flex h-10 items-center">
          <span className="w-[108px]">Profile</span>
          <button className="flex h-10 w-[117px] items-center gap-2 border border-[#b8b8b8] bg-white pl-[10px]">
            <Cursor />1 selected
          </button>
          <Clear label="Clear profile" />
        </div>
        <div className="flex h-10 items-center">
          <span className="w-[108px]">Axis</span>
          <button className="flex h-10 w-[117px] items-center gap-2 border border-[#0b93da] bg-[#0b93da] pl-[10px] text-white">
            <Cursor light />1 selected
          </button>
          <Clear label="Clear axis" />
        </div>
        <div className="flex h-10 items-center">
          <label htmlFor="project-axis" className="w-[108px]">
            Project Axis
          </label>
          <span className="relative ml-[7px] h-5 w-5">
            <input
              id="project-axis"
              type="checkbox"
              defaultChecked
              className="peer h-5 w-5 appearance-none rounded border-2 border-[#555] bg-[#c9c9c9]"
            />
            <svg className="pointer-events-none absolute inset-0 hidden h-5 w-5 peer-checked:block" viewBox="0 0 20 20" fill="none">
              <path d="M4 11L8 16L16 4" stroke="#111" strokeWidth="2" />
            </svg>
          </span>
        </div>
        <div className="flex h-10 items-center">
          <label htmlFor="extent" className="w-[108px]">
            Extent Type
          </label>
          <span className="relative">
            <select id="extent" className="h-10 w-[199px] appearance-none border border-[#b8b8b8] bg-white pl-[34px]">
              <option>Full</option>
            </select>
            <Icon className="pointer-events-none absolute top-2 left-[6px] h-[22px] w-[22px]" box="0 0 22 22">
              <path d="M8 1.500A10 10 0 1 1 2 7" stroke="#555" strokeWidth="1.300" />
              <path d="M0 3H7L3 9Z" fill="#333" />
              <circle cx="11" cy="11" r="1.500" fill="#333" />
            </Icon>
            <span className="pointer-events-none absolute top-4 right-[7px] flex">
              <Caret />
            </span>
          </span>
        </div>
        <div className="flex h-10 items-center">
          <label htmlFor="operation" className="w-[108px]">
            Operation
          </label>
          <span className="relative">
            <select id="operation" className="h-10 w-[199px] appearance-none border border-[#b8b8b8] bg-white pl-[34px]">
              <option>Cut</option>
            </select>
            <Icon className="pointer-events-none absolute top-2 left-[6px] h-[22px] w-[22px]" box="0 0 22 22">
              <path d="M0 9H5V17H17V9H22V22H0Z" fill="#5aa5dc" />
              <path d="M6 1H16V15H6Z" fill="#f2b3ae" />
            </Icon>
            <span className="pointer-events-none absolute top-4 right-[7px] flex">
              <Caret />
            </span>
          </span>
        </div>
        <button className="-ml-1 flex h-10 items-center gap-[15px] font-bold">
          <Icon className="h-3 w-2" box="0 0 8 12">
            <path d="M0 0L8 6L0 12Z" fill="#222" />
          </Icon>
          Objects To Cut
        </button>
      </div>
      <div className="mt-1 flex h-[55px] items-center border-t-2 border-[#cdd1d5] pr-[17px] pl-3 text-[#666]">
        <Icon className="h-[18px] w-[18px]" box="0 0 18 18">
          <circle cx="9" cy="9" r="9" fill="#050505" />
          <path d="M9 3V6M7 8H10V14M7 14H12" stroke="#fff" strokeWidth="2" />
        </Icon>
        <button className="ml-auto h-[29px] w-[90px] border border-[#b0b0b0] bg-[#e9e9e9]">OK</button>
        <button className="ml-[15px] h-[29px] w-[90px] border border-[#b0b0b0] bg-[#e9e9e9]">Cancel</button>
      </div>
    </section>
  );
}

const lens = (
  <>
    <circle cx="9" cy="9" r="8" fill="#eef4f6" stroke="#666" strokeWidth="1.300" />
    <path d="M14 14L22 22" stroke="#333" strokeWidth="4" />
  </>
);

const NAV = [
  {
    name: 'Orbit',
    menu: true,
    art: (
      <>
        <path d="M11 1L15 6H13V22H9V6H7Z" fill="#e8e8e8" stroke="#555" />
        <path d="M6 9C-1 11 0 15 8 16M16 9C23 10 24 15 15 16" stroke="#333" strokeWidth="1.500" />
        <path d="M4 18L9 16L5 13Z" fill="#222" />
      </>
    ),
  },
  {
    name: 'Look At',
    art: (
      <>
        <path d="M1 8H23V22H1Z" fill="#f4f4f4" stroke="#555" />
        <path d="M4 11H20V18H4Z" fill="#8e95a6" stroke="#555" />
        <path d="M3 6L9 3M9 6L15 2L17 5" stroke="#444" strokeWidth="1.500" />
      </>
    ),
  },
  {
    name: 'Pan',
    art: (
      <path
        d="M8 22C6 18 1 15 1 12C3 11 5 13 6.500 14L4.500 4C5.500 2.500 7 3.500 7.300 5L9 11L8.800 2C9.800 0 11.500 1 11.800 2L12.300 10L14.500 2C15.500 1 17.200 2 16.800 4L15.500 11L19.500 5.500C21.500 4.500 22 6.500 21.500 8C19 12 18 17 15.500 22Z"
        fill="#fff"
        stroke="#444"
        strokeWidth="1.200"
      />
    ),
  },
  { name: 'Zoom', art: <>{lens}<path d="M20 1V8M17 4H23M17 10H23" stroke="#444" /></> },
  { name: 'Fit', menu: true, art: <><path d="M1 1H22V22H1Z" stroke="#999" strokeDasharray="3 2" />{lens}</> },
  {
    name: 'Display Settings',
    menu: true,
    art: (
      <>
        <path d="M1 1H23V17H1Z" fill="#f4f4f4" stroke="#555" />
        <path d="M3 3H21V15H3Z" fill="#86aee0" />
        <path d="M9 18H15V20H19V22H5V20H9Z" fill="#666" />
      </>
    ),
  },
  {
    name: 'Grid and Snaps',
    menu: true,
    art: (
      <>
        <path d="M1 1H23V22H1Z" fill="#e4e4e8" stroke="#333" />
        <path d="M4.500 1V22M8 1V22M12 1V22M16 1V22M19.500 1V22M1 5H23M1 8.500H23M1 12H23M1 15.500H23M1 19H23" stroke="#555" strokeWidth="0.700" />
      </>
    ),
  },
  {
    name: 'Viewports',
    menu: true,
    art: (
      <>
        <path d="M1 2H23V21H1Z" fill="#8fb4e0" stroke="#35507a" />
        <path d="M12 2V21M1 11.500H23" stroke="#4f6f9c" strokeWidth="1.500" />
      </>
    ),
  },
];

function NavBar() {
  return (
    <div className="absolute inset-x-0 bottom-[10px] flex justify-center pl-1.5">
      <div className="flex h-9 items-center gap-2 bg-[#f1f1f1] pr-[6px] pl-[6px]">
        {NAV.map((tool) => (
          <button key={tool.name} aria-label={tool.name} className={`flex items-center ${tool.menu ? 'gap-1' : 'px-1'}`}>
            <Icon className="h-[23px] w-6" box="0 0 24 23">
              {tool.art}
            </Icon>
            {tool.menu && <Caret />}
          </button>
        ))}
      </div>
    </div>
  );
}

function Viewport() {
  return (
    <main className="relative min-h-[600px] flex-1 overflow-hidden bg-[#323b48]">
      <Scene />
      <p className="absolute top-[309px] left-[615px] flex items-baseline whitespace-nowrap text-[#e3e0e2]/85">
        <span className="font-['Noto_Sans_CJK_SC',sans-serif] text-7xl font-light">莫西网</span>
        <span className="font-['Liberation_Mono',monospace] text-6xl">www.3dmox.com</span>
      </p>
      <ViewCube />
      <Browser />
      <RevolveDialog />
      <div className="absolute bottom-1.5 left-1.5 flex h-[38px] w-[450px] items-center border-b-2 border-[#c9ccd2] bg-[#f2f1f1] pt-0.5 pr-[18px] pl-[38px] text-base text-[#555]">
        <h2>COMMENTS</h2>
        <button aria-label="Show comments" className="ml-auto">
          <Icon className="h-[14px] w-[14px]" box="0 0 14 14">
            <circle cx="7" cy="7" r="7" fill="#333" />
            <path d="M3 7H11M7 3V11" stroke="#ddd" strokeWidth="2" />
          </Icon>
        </button>
      </div>
      <NavBar />
      <div className="absolute right-[13px] bottom-[11px] flex items-center gap-6 text-base font-bold text-[#eef1f4]">
        1 Profile 1 Z | Angle : 0.0 deg
        <button aria-label="Assistant">
          <Icon className="h-[26px] w-[26px]" box="0 0 26 26">
            <path d="M13 1A12 12 0 1 0 13 25H25V13A12 12 0 0 0 13 1Z" fill="#000" stroke="#fff" strokeWidth="1.500" />
            <path d="M6 14L16 8M6 18L20 10M13 18L20 14" stroke="#fff" strokeWidth="1.500" />
          </Icon>
        </button>
      </div>
    </main>
  );
}

const TRANSPORT = [
  { name: 'Go to start', art: 'M1 3H4V21H1ZM18 4V20L4 12Z' },
  { name: 'Step back', art: 'M15 4V20L0 12ZM16 8H19V16H16Z' },
  { name: 'Play', art: 'M1 1L19 12L1 23Z' },
  { name: 'Step forward', art: 'M4 4V20L19 12ZM0 8H3V16H0Z' },
  { name: 'Go to end', art: 'M2 4V20L16 12ZM16 3H19V21H16Z' },
];

const FEATURES = ['sketch', 'sketch', 'extrude', 'sketch', 'sketch', 'extrude', 'active'];

const Pencil = () => (
  <>
    <path d="M13 22L15 17L20 12L24 16L18 22Z" fill="#f0b040" />
    <path d="M20 12L22 11L25 14L24 16Z" fill="#e04a3a" />
    <path d="M13 23L15 17L18 21Z" fill="#c9a46a" />
  </>
);

function Timeline() {
  return (
    <footer className="flex h-[70px] items-center bg-[#f0f0f0] text-[#555]">
      <div className="flex gap-4 pl-4">
        {TRANSPORT.map((control) => (
          <button key={control.name} aria-label={control.name}>
            <Icon className="h-6 w-5" box="0 0 20 24">
              <path d={control.art} fill="currentColor" />
            </Icon>
          </button>
        ))}
      </div>
      <div className="relative ml-[34px] flex">
        {FEATURES.map((feature, i) => (
          <button
            key={i}
            aria-label={`Feature ${i + 1}`}
            className={`relative grid h-9 w-9 place-items-center ${feature === 'active' ? 'rounded bg-[#0b93da]' : ''}`}
          >
            <Icon className="h-6 w-[26px]" box="0 0 26 24">
              {feature === 'extrude' ? (
                <>
                  <path d="M1 9L5 6V3L9 1H24V14L19 18H9L7 20H3L1 17Z" fill="#68b0e6" />
                  <path d="M1 9L5 6H12L9 10H1ZM9 4L13 1H24L20 5Z" fill="#9ad0f5" />
                  <path d="M9 14H18V23H9Z" fill="#fff" stroke="#777" />
                </>
              ) : (
                <>
                  <path d="M3 2V21H13M3 2H21V12" stroke={feature === 'active' ? '#fff' : '#7c8795'} strokeWidth="1.300" />
                  <path
                    d="M1 0H4V3H1ZM20 0H23V3H20ZM1 20H4V23H1Z"
                    fill={feature === 'active' ? '#fff' : '#55779b'}
                  />
                  {feature === 'sketch' && <path d="M7 7H17C16 12 13 15 7 16Z" stroke="#7c8795" strokeWidth="1.300" />}
                  <Pencil />
                </>
              )}
            </Icon>
            <span className="absolute top-[34px] h-[10px] w-1 bg-[#c9c9c9]" />
          </button>
        ))}
        <span className="absolute top-[43px] right-4 left-4 h-[3px] bg-[#c9c9c9]" />
        <Icon className="absolute -top-[3px] -right-[9px] h-12 w-[18px]" box="0 0 18 48">
          <path d="M0 0H18V6L11 12V48H8V12L0 6Z" fill="#555" />
        </Icon>
      </div>
      <button aria-label="Timeline settings" className="mr-4 ml-auto text-[#777]">
        <Gear className="h-[23px] w-6" />
      </button>
    </footer>
  );
}

export default function App() {
  return (
    <div className="flex min-h-screen flex-col overflow-x-hidden font-['Liberation_Sans',Arial,sans-serif] text-base leading-5">
      <TitleBar />
      <DocumentBar />
      <Ribbon />
      <Viewport />
      <Timeline />
    </div>
  );
}
